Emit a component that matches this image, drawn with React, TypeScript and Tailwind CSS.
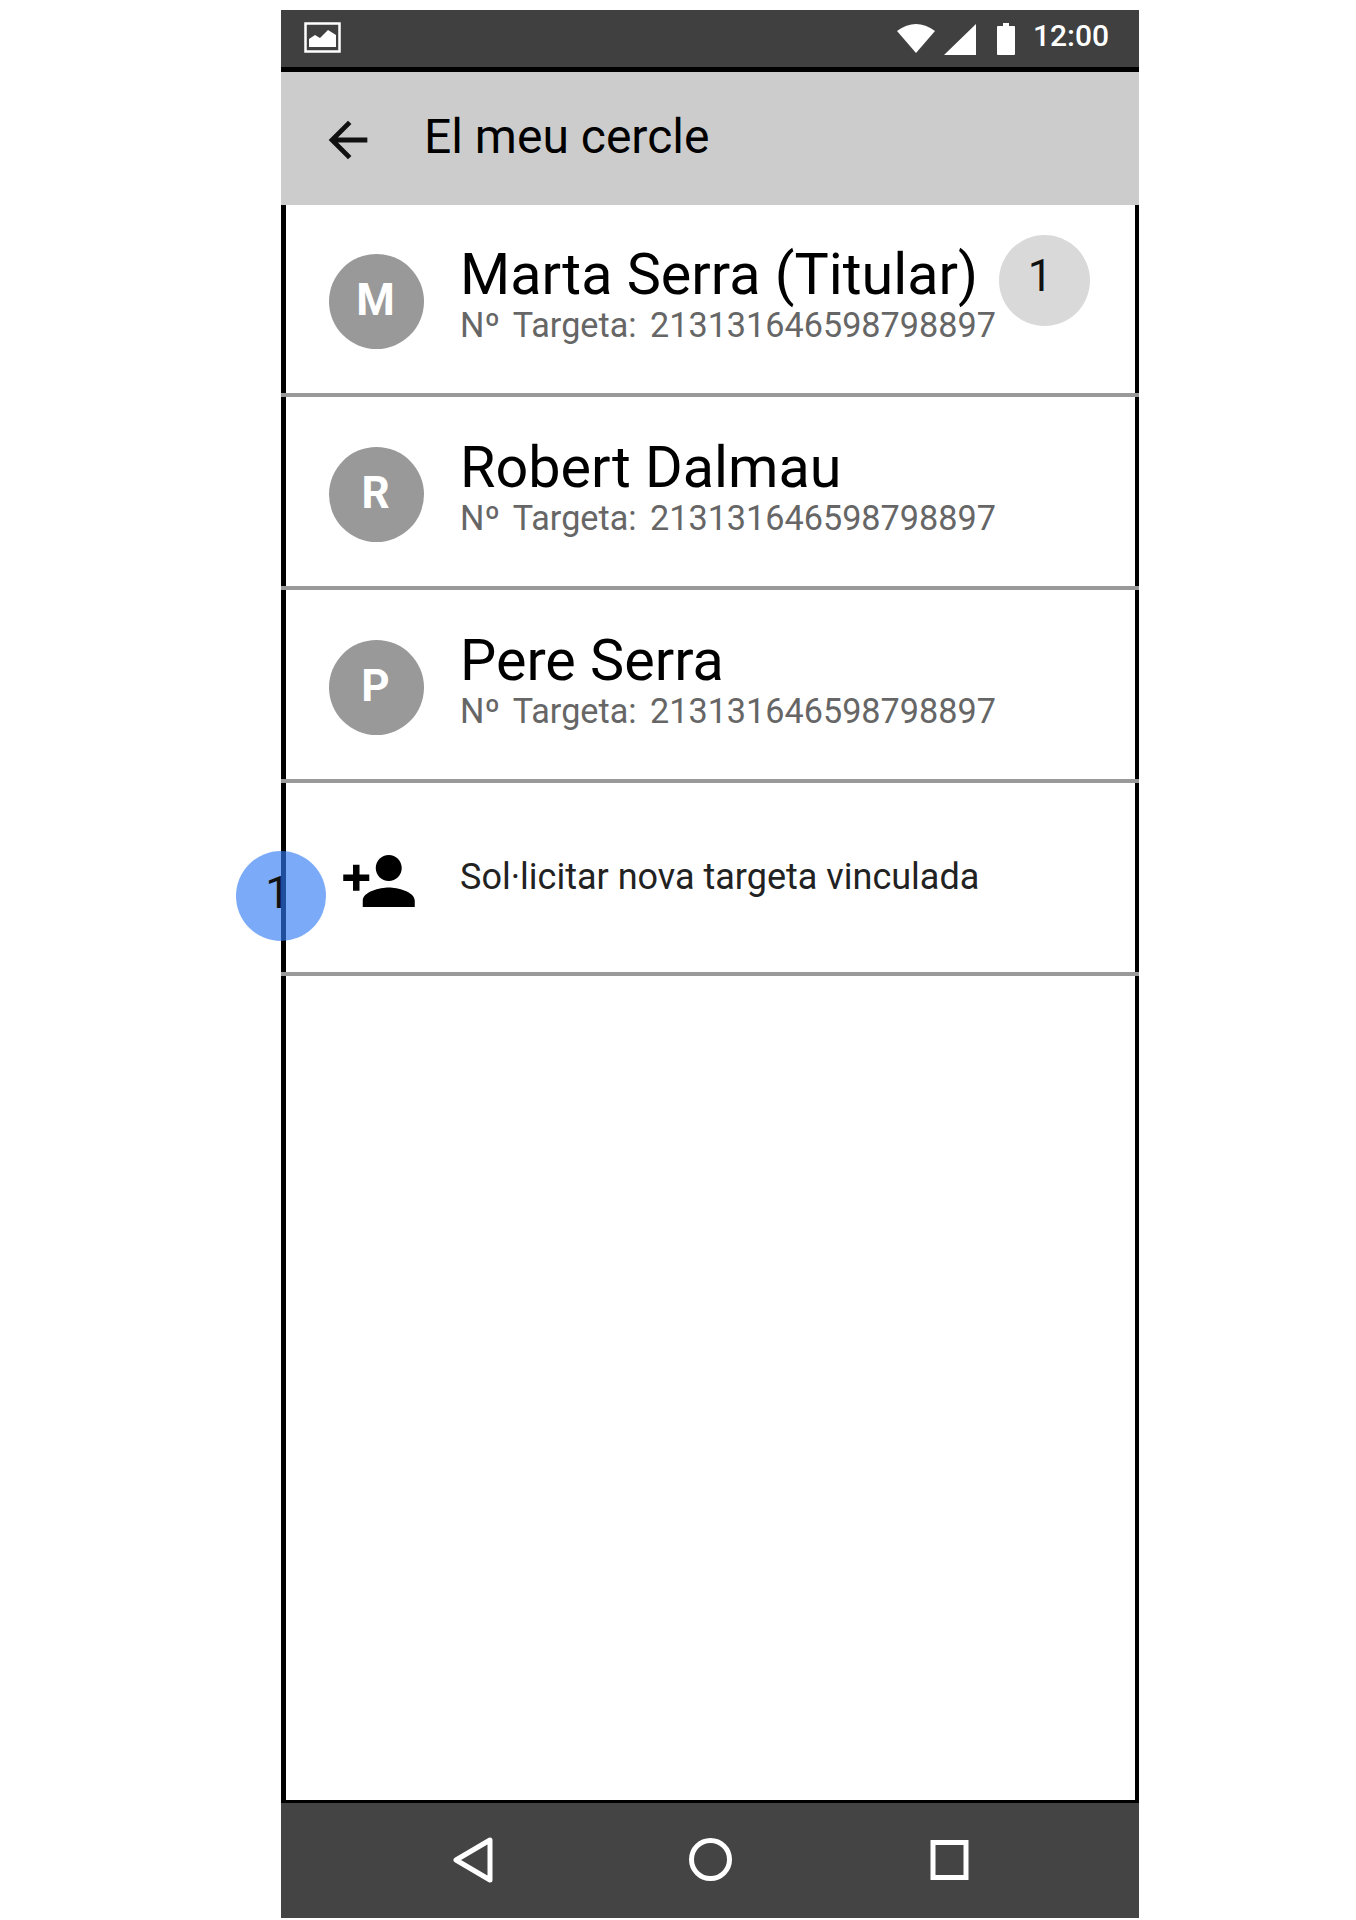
import React from "react";

const cards = [
  { letter: "M", name: "Marta Serra (Titular)", height: "h-[192px]", top: "pt-[49px]", badge: true },
  { letter: "R", name: "Robert Dalmau", height: "h-[193px]", top: "pt-[50px]", badge: false },
  { letter: "P", name: "Pere Serra", height: "h-[193px]", top: "pt-[50px]", badge: false },
];

const StatusBar = () => (
  <div className="flex h-[62px] items-start border-b-[5px] border-black bg-[#404040] pl-[23px] pr-[30px] pt-[12px]">
    <svg width="38" height="32" viewBox="0 0 38 32">
      <rect x="1.5" y="1.5" width="34" height="28" fill="none" stroke="#fff" strokeWidth="2.5" />
      <path d="M5 25 V17 L11 13 L16 16 L24 8 L32 13 V25 Z" fill="#fff" />
    </svg>
    <svg width="38" height="29" viewBox="0 0 38 29" className="ml-auto mt-[2px]">
      <path d="M0 7 Q19 -7 38 7 L19 29 Z" fill="#fff" />
    </svg>
    <svg width="32" height="31" viewBox="0 0 32 31" className="ml-[9px] mt-[2px]">
      <path d="M32 0 V31 H0 Z" fill="#fff" />
    </svg>
    <svg width="18" height="32" viewBox="0 0 18 32" className="ml-[21px] mt-[1px]">
      <path d="M6 0 H12 V3 H17 Q18 3 18 4 V31 Q18 32 17 32 H1 Q0 32 0 31 V4 Q0 3 1 3 H6 Z" fill="#fff" />
    </svg>
    <span className="ml-[18px] mt-[-6px] text-[30px] font-medium leading-[40px] text-white">12:00</span>
  </div>
);

const Header = () => (
  <div className="flex h-[133px] items-center bg-[#cccccc] pl-[38px]">
    <svg width="58" height="58" viewBox="0 0 24 24" className="mt-[2px]">
      <path d="M20 11H7.83l5.59-5.59L12 4l-8 8 8 8 1.41-1.41L7.83 13H20v-2z" fill="#111" />
    </svg>
    <span className="ml-[47px] mt-[-4px] text-[48px] leading-[56px] text-black">El meu cercle</span>
  </div>
);

const NavBar = () => (
  <div className="flex h-[115px] items-center justify-center gap-[196px] bg-[#444444] pb-[2px]">
    <svg width="43" height="46" viewBox="0 0 43 46">
      <path d="M40 3 V43 L6 23 Z" fill="none" stroke="#fff" strokeWidth="5" strokeLinejoin="round" />
    </svg>
    <svg width="43" height="43" viewBox="0 0 43 43">
      <circle cx="21.5" cy="21.5" r="19" fill="none" stroke="#fff" strokeWidth="5" />
    </svg>
    <svg width="43" height="40" viewBox="0 0 43 40">
      <rect x="5" y="2.5" width="33" height="35" fill="none" stroke="#fff" strokeWidth="5" />
    </svg>
  </div>
);

export default function App() {
  return (
    <div className="min-h-[1920px] bg-white pl-[281px] pt-[10px] font-['Roboto',sans-serif]">
      <div className="flex h-[1908px] w-[858px] flex-col">
        <StatusBar />
        <Header />
        <div className="flex-1 border-b-[3px] border-l-[5px] border-r-[4px] border-black bg-white">
          {cards.map((card) => (
            <div
              key={card.letter}
              className={`relative -ml-[5px] -mr-[4px] flex items-start border-b-[4px] border-[#999999] pl-[48px] ${card.height} ${card.top}`}
            >
              <div className="flex h-[95px] w-[95px] shrink-0 items-center justify-center rounded-full bg-[#999999] pb-[4px] pr-[2px] text-[44px] font-bold text-white">
                {card.letter}
              </div>
              <div className="ml-[36px] mt-[-9px]">
                <div className="whitespace-nowrap text-[57.5px] leading-[60px] text-black">{card.name}</div>
                <div className="mt-[-1px] whitespace-nowrap text-[34.2px] leading-[42px] text-[#666666] [word-spacing:5px]">
                  Nº Targeta: 213131646598798897
                </div>
              </div>
              {card.badge && (
                <div className="absolute left-[718px] top-[30px] flex h-[91px] w-[91px] items-center justify-center rounded-full bg-[#d9d9d9] pb-[10px] pr-[9px] text-[44px] text-[#111]">
                  1
                </div>
              )}
            </div>
          ))}
          <div className="relative -ml-[5px] -mr-[4px] flex h-[193px] items-start border-b-[4px] border-[#999999] pl-[59px] pt-[59px]">
            <svg width="78" height="78" viewBox="0 0 24 24" className="shrink-0">
              <path
                d="M15 12c2.21 0 4-1.79 4-4s-1.79-4-4-4-4 1.79-4 4 1.79 4 4 4zm-9-2V7H4v3H1v2h3v3h2v-3h3v-2H6zm9 4c-2.67 0-8 1.34-8 4v2h16v-2c0-2.66-5.33-4-8-4z"
                fill="#000"
              />
            </svg>
            <span className="ml-[42px] mt-[13px] whitespace-nowrap text-[36px] leading-[44px] text-[#222222]">
              Sol·licitar nova targeta vinculada
            </span>
            <div className="absolute left-[-45px] top-[68px] flex h-[90px] w-[90px] items-center justify-center rounded-full bg-[rgba(47,122,244,0.64)] pb-[7px] pr-[7px] text-[44px] text-[#111]">
              1
            </div>
          </div>
        </div>
        <NavBar />
      </div>
    </div>
  );
}
